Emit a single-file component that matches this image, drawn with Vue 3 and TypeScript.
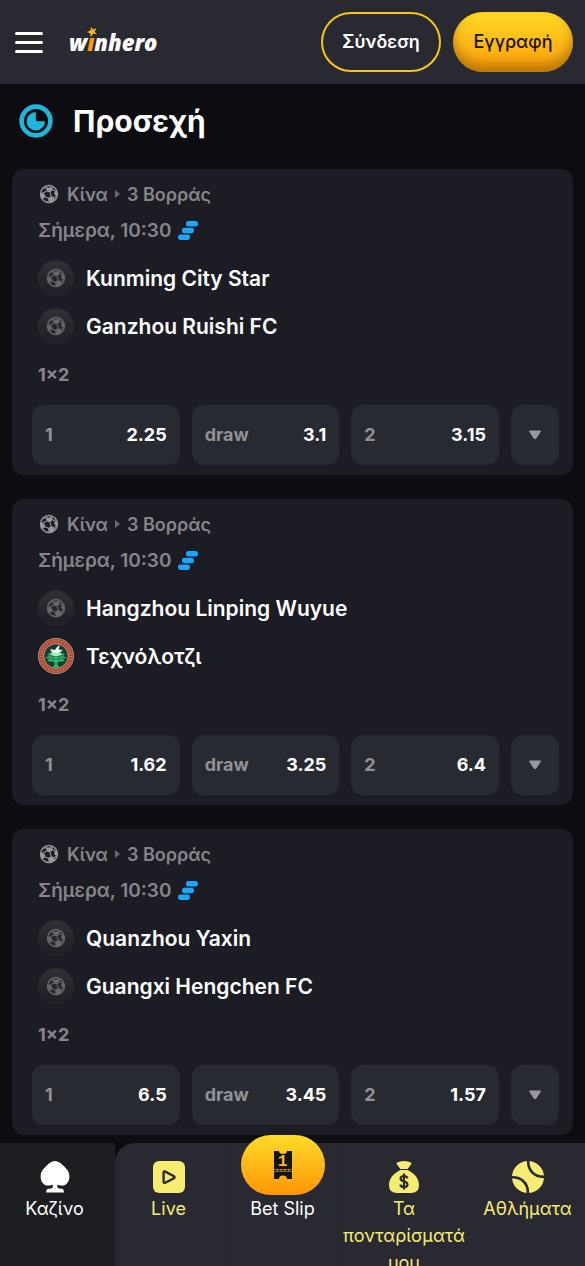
<script setup lang="ts">
interface Team { name: string; crest?: boolean }
interface Match { id: number; teams: Team[]; odds: [string, string, string] }

const outcomes = ['1', 'draw', '2']
const matches: Match[] = [
  { id: 1, teams: [{ name: 'Kunming City Star' }, { name: 'Ganzhou Ruishi FC' }], odds: ['2.25', '3.1', '3.15'] },
  { id: 2, teams: [{ name: 'Hangzhou Linping Wuyue' }, { name: 'Τεχνόλοτζι', crest: true }], odds: ['1.62', '3.25', '6.4'] },
  { id: 3, teams: [{ name: 'Quanzhou Yaxin' }, { name: 'Guangxi Hengchen FC' }], odds: ['6.5', '3.45', '1.57'] },
]
</script>

<template>
  <div class="shell">
    <svg class="defs" aria-hidden="true">
      <symbol id="ball" viewBox="0 0 20 20">
        <circle cx="10" cy="10" r="8.5" fill="none" stroke="currentColor" stroke-width="1.4" />
        <g fill="currentColor">
          <path d="M7.200 2.800 9.600 3.800 13.200 2.400 13.800 6 11 8.400 7.400 7.200Z" />
          <path d="M1.400 8.600 4.200 8.800 6.400 11.600 5.400 14.200 3 14.600 1.400 11.600Z" />
          <path d="M9 14 12.200 12 15.600 13.600 15.200 17 11.600 18.600 9.400 17.200Z" />
          <path d="M16 6.600 18.200 7.400 18.700 11 17.200 12 15 9.800Z" />
          <path d="M3.600 4.400 6 2.400 5.400 4.400Z" />
        </g>
        <path d="M7.400 7.200 4.200 8.800M11 8.400 12.200 12M6 13 9 14M13.800 6 16 6.600M15.600 13.600 17 12M7.200 4 5 4" fill="none" stroke="currentColor" stroke-width="1.100" />
      </symbol>
    </svg>

    <header class="topbar">
      <button class="menu" type="button" aria-label="Menu"><span></span><span></span><span></span></button>
      <a class="logo" href="#" aria-label="winhero">
        <span>w<b>ı</b>nhero</span>
        <svg class="star" viewBox="0 0 12 12" aria-hidden="true">
          <path d="M5.2.8 6.8 3.5 10.6 2 8.6 5.4 11 8.4 7.4 7.6 4.6 11 4.3 7.4.8 6 4.5 4.6Z" fill="#ffb31a" />
        </svg>
      </a>
      <button class="login" type="button">Σύνδεση</button>
      <button class="signup" type="button">Εγγραφή</button>
    </header>

    <main>
      <h1>
        <svg viewBox="0 0 34 34" aria-hidden="true">
          <circle cx="17" cy="17" r="14.4" fill="none" stroke="#1fb6dc" stroke-width="4.6" />
          <path d="M16.800 8V15.200a2 2 0 0 0 2 2h7.200a9.200 9.200 0 1 1-9.200-9.200Z" fill="#1fb6dc" />
        </svg>
        Προσεχή
      </h1>

      <article v-for="m in matches" :key="m.id" class="card">
        <div class="league">
          <svg class="ball" aria-hidden="true"><use href="#ball" /></svg>
          <span>Κίνα</span><i class="sep"></i><span>3 Βορράς</span>
        </div>
        <div class="time">
          <span>Σήμερα, 10:30</span>
          <svg viewBox="0 0 20 19" aria-hidden="true">
            <g fill="#1da5fa">
              <rect x="8" y="0" width="12" height="5.6" rx="2.4" />
              <rect x="4" y="6.700" width="12" height="5.600" rx="2.4" />
              <rect x="0" y="13.400" width="12" height="5.600" rx="2.4" />
            </g>
          </svg>
        </div>
        <div class="teams">
          <div v-for="t in m.teams" :key="t.name" class="team">
            <svg v-if="t.crest" class="crest" viewBox="0 0 36 36" aria-hidden="true">
              <circle cx="18" cy="18" r="17.6" fill="#b3472f" stroke="#b8aca2" stroke-width=".8" />
              <circle cx="18" cy="18" r="14.9" fill="none" stroke="#dcb6a5" stroke-width="2" stroke-dasharray="1.2 1.8" opacity=".5" />
              <circle cx="18" cy="18" r="12.3" fill="#183c2d" stroke="#c9b8a8" stroke-width=".8" />
              <path d="M18 12 24 13 23 15 27 16 25 18 29 20 25 21 27 23 19.500 24 19.500 27 22 29.500H14L16.500 27 16.500 24 9 23 11 21 7 20 11 18 9 16 13 15 12 13Z" fill="#35b36a" />
              <path d="M16 14H20L24 16 20 18 16 18 12 16Z" fill="#a5eabf" />
              <path d="M12 11 17 12 19 9 22 7 20.500 11.500 25 12 20 15H15Z" fill="#f4faf5" />
              <path d="M11 17.500 17 19M25 17.500 19 19M9 20 17 21.500M27 20 19 21.500" stroke="#183c2d" stroke-width=".6" />
            </svg>
            <span v-else class="badge"><svg class="ball" aria-hidden="true"><use href="#ball" /></svg></span>
            <span>{{ t.name }}</span>
          </div>
        </div>
        <div class="market">1×2</div>
        <div class="odds">
          <button v-for="(o, i) in m.odds" :key="i" type="button" class="odd">
            <span>{{ outcomes[i] }}</span><strong>{{ o }}</strong>
          </button>
          <button type="button" class="more" aria-label="More">
            <svg viewBox="0 0 14 10" aria-hidden="true"><path d="M1.400 1H12.600L8.200 8Q7 9.600 5.800 8Z" fill="#98989c" stroke="#98989c" stroke-linejoin="round" /></svg>
          </button>
        </div>
      </article>
    </main>

    <nav class="tabs">
      <a href="#" class="tab casino">
        <svg viewBox="0 0 32 32" aria-hidden="true">
          <path d="M16 0C12.500 0 10.400 2.200 7 5.200 3.400 8.400 1.600 11.400 1.600 15.400c0 5.200 3.200 9.200 7.600 9.200 2 0 3.400-.6 4.600-1.200v2.400q0 1.400-1.400 1.600l-3 .4Q7.200 28.200 7.200 30v1.600h17.600v-1.600q0-1.800-2-2.200l-3-.4q-1.400-.2-1.400-1.600v-2.400c1.200.6 2.600 1.200 4.600 1.200 4.200 0 7.400-4 7.400-9.200 0-4-1.800-7-5.400-10.200C21.600 2.200 19.500 0 16 0Z" fill="#fff" />
        </svg>
        <span>Καζίνο</span>
      </a>
      <a href="#" class="tab live">
        <svg viewBox="0 0 32 32" aria-hidden="true">
          <rect width="32" height="32" rx="6" fill="#f6ec72" />
          <path d="M10.600 11.800q0-1.800 1.700-1.100l8.600 4.500q1.400 1 0 2l-8.600 4.500q-1.700.7-1.700-1.100Z" fill="none" stroke="#292932" stroke-width="2.400" />
        </svg>
        <span>Live</span>
      </a>
      <a href="#" class="tab slip">
        <span class="pill">
          <svg viewBox="0 0 18 28" aria-hidden="true">
            <path d="M0 0H5a4 3 0 0 0 8 0H18V18H0ZM0 20.500H18V28H13a4 3.500 0 0 0-8 0H0Z" fill="#10151a" />
            <path d="M0 19.200H18" stroke="#10151a" stroke-width="1.400" stroke-dasharray="2.900 .9" />
          </svg>
          <em>1</em>
        </span>
        <span>Bet Slip</span>
      </a>
      <a href="#" class="tab bets">
        <svg viewBox="0 0 32 32" aria-hidden="true">
          <path d="M9 1.500Q12 0 16 0t7 1.500q1 .8 0 2L19.600 8H12.400L9 3.500q-1-1.200 0-2ZM12.400 9h7.200C26 12 31 17 31 24q0 8-8 8H9q-8 0-8-8C1 17 6 12 12.400 9Z" fill="#f6ec72" />
          <path d="M19.600 17.200Q18.600 15 16 15q-3.400 0-3.400 2.600 0 2.200 3.400 2.900t3.500 3q0 2.600-3.500 2.600-3 0-3.800-2.500M16 12.600v16" fill="none" stroke="#292932" stroke-width="2.200" />
        </svg>
        <span>Τα πονταρίσματά μου</span>
      </a>
      <a href="#" class="tab sports">
        <svg viewBox="0 0 32 32" aria-hidden="true">
          <circle cx="16" cy="16" r="16" fill="#f6ec72" />
          <path d="M16.300-1C15.500 9 22 16.500 33 15.800M-1 16.300C9 15.500 16.500 22 15.800 33" fill="none" stroke="#292932" stroke-width="2.600" />
        </svg>
        <span>Αθλήματα</span>
      </a>
    </nav>
  </div>
</template>

<style>
body { margin: 0; background: #0d0d11; }
</style>

<style scoped>
* { box-sizing: border-box; }
.shell {
  display: flex; flex-direction: column; height: 100vh; overflow: hidden;
  background: #0d0d11; color: #fff; font-family: Inter, "Liberation Sans", sans-serif;
}
.defs { display: none; }
button { font: inherit; color: inherit; border: 0; padding: 0; margin: 0; background: none; cursor: pointer; }
a { color: inherit; text-decoration: none; }

.topbar { flex: none; display: flex; align-items: center; gap: 12px; height: 84px; padding: 0 12px 0 15px; background: #292932; }
.menu { display: flex; flex-direction: column; gap: 6px; width: 28px; }
.menu span { height: 3px; border-radius: 2px; background: #fff; }
.logo { position: relative; margin-left: 14px; margin-right: auto; font-size: 22px; line-height: 28px; font-weight: 800; font-style: italic; font-family: "Open Sans", sans-serif; }
.logo b { font-weight: inherit; color: #ff9d0a; }
.star { position: absolute; left: 17px; top: -2px; width: 12px; height: 12px; }
.login, .signup { width: 120px; height: 60px; padding-bottom: 2px; border-radius: 30px; font-size: 18px; font-weight: 600; }
.login { border: 2px solid #f6c713; }
.signup { color: #16140c; font-weight: 500; background: linear-gradient(#ffd924, #ff9d0c); box-shadow: inset 0 -8px 12px rgba(120, 80, 0, .5); }

main { flex: none; padding: 0 12px 8px; }
h1 { display: flex; align-items: center; gap: 20px; height: 85px; margin: 0; padding: 0 7px 11px; font-size: 30px; font-weight: 700; }
h1 svg { width: 34px; height: 34px; }

.card { padding: 7px 14px 10px 20px; border-radius: 12px; background: #1c1c24; }
.card + .card { margin-top: 24px; }
.league, .time { display: flex; align-items: center; height: 36px; padding-left: 6px; font-size: 18px; color: #86868a; }
.league { font-weight: 600; padding-left: 7px; }
.time { font-size: 19px; font-weight: 600; gap: 7px; }
.time svg { width: 20px; height: 19px; }
.ball { width: 20px; height: 20px; color: #98989c; }
.league .ball { margin-right: 8px; }
.sep { margin: 0 7px; border: solid transparent; border-width: 4px 0 4px 5px; border-left-color: #6a6a70; }
.teams { padding: 6px 0 0 6px; }
.team { display: flex; align-items: center; gap: 12px; height: 48px; font-size: 21px; font-weight: 600; }
.crest, .badge { flex: none; width: 36px; height: 36px; }
.badge { display: grid; place-items: center; border-radius: 50%; border: 1px solid #2b2b32; background: linear-gradient(#303035, #1e1e25); }
.badge .ball { color: #66666b; }
.market { height: 55px; padding-left: 6px; font-size: 18px; line-height: 50px; font-weight: 700; color: #86868a; }
.odds { display: grid; grid-template-columns: 1fr 1fr 1fr 48px; gap: 12px; }
.odd, .more { height: 60px; padding-bottom: 2px; border-radius: 12px; background: #282a32; }
.odd { display: flex; align-items: center; justify-content: space-between; padding: 0 13px 2px; font-size: 18px; }
.odd span { color: #919195; font-weight: 700; }
.odd strong { font-weight: 700; }
.more svg { display: block; width: 14px; height: 10px; margin: 2px auto 0; }

.tabs { flex: 1; display: grid; grid-template-columns: 115fr 113fr 115fr 122fr 120fr; }
.tab { display: flex; flex-direction: column; align-items: center; padding-top: 18px; font-size: 18px; line-height: 27px; text-align: center; color: #f6ec72; background: #292932; }
.tab > svg { flex: none; width: 32px; height: 32px; margin-bottom: 2px; }
.casino { padding-right: 6px; color: #fff; background: #1d1e22; }
.live { padding-right: 6px; border-radius: 20px 0 0 0; }
.slip { padding-top: 0; padding-right: 6px; color: #fff; border: solid #25252d; border-width: 0 1px; }
.pill { position: relative; display: grid; place-items: center; flex: none; width: 84px; height: 60px; margin-top: -8px; border-radius: 30px; background: linear-gradient(#ffdb28, #ff9505); }
.pill svg { width: 18px; height: 28px; }
.pill em { position: absolute; inset: 0; line-height: 54px; font-size: 16px; font-style: normal; font-weight: 700; color: #ffb817; font-family: "Liberation Mono", monospace; }
.sports { padding-left: 5px; }
</style>
